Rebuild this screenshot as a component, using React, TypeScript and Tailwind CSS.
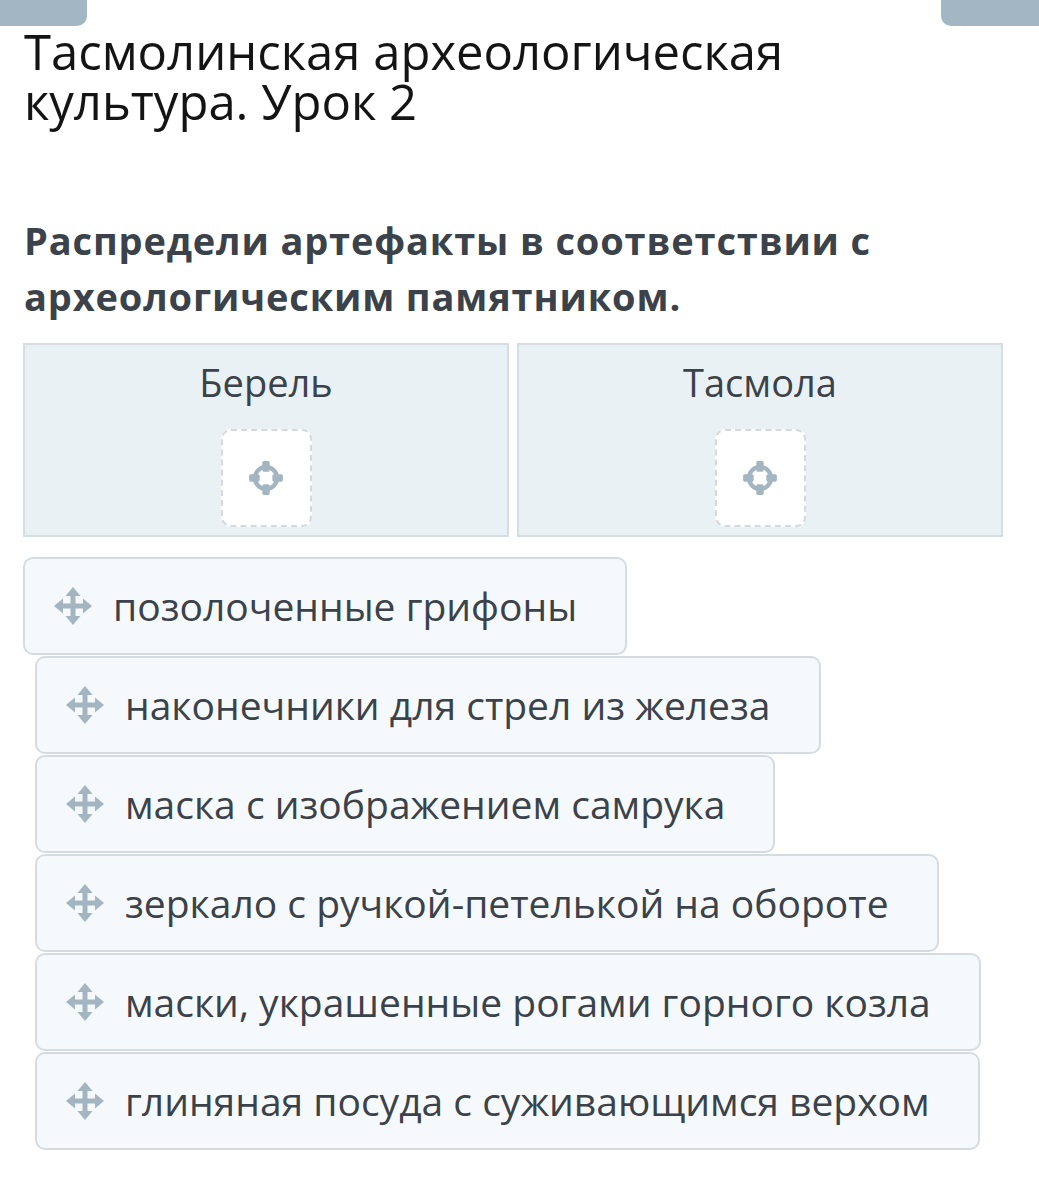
import React from "react";

const items = [
  { text: "позолоченные грифоны", indent: false },
  { text: "наконечники для стрел из железа", indent: true },
  { text: "маска с изображением самрука", indent: true },
  { text: "зеркало с ручкой-петелькой на обороте", indent: true },
  { text: "маски, украшенные рогами горного козла", indent: true },
  { text: "глиняная посуда с суживающимся верхом", indent: true },
];

function MoveIcon() {
  return (
    <svg width="40" height="40" viewBox="0 0 40 40" className="shrink-0">
      <g fill="#a4b5c2">
        <rect x="17.5" y="8" width="5" height="24" />
        <rect x="8" y="17.5" width="24" height="5" />
        <polygon points="20,1 27.5,10 12.5,10" />
        <polygon points="20,39 27.5,30 12.5,30" />
        <polygon points="1,20 10,12.5 10,27.5" />
        <polygon points="39,20 30,12.5 30,27.5" />
      </g>
    </svg>
  );
}

function TargetIcon() {
  return (
    <svg width="38" height="38" viewBox="0 0 36 36">
      <circle cx="18" cy="18" r="10.5" fill="none" stroke="#a4b5c2" strokeWidth="4" />
      <g fill="#a4b5c2">
        <rect x="14.5" y="2" width="7" height="10" rx="1.5" />
        <rect x="14.5" y="24" width="7" height="10" rx="1.5" />
        <rect x="2" y="14.5" width="10" height="7" rx="1.5" />
        <rect x="24" y="14.5" width="10" height="7" rx="1.5" />
      </g>
    </svg>
  );
}

function DropZone({ label }: { label: string }) {
  return (
    <div className="flex h-[194px] flex-1 flex-col items-center border-2 border-[#d5dee3] bg-[#e9f1f5] pt-[12px]">
      <div className="text-[38px] leading-[50px] text-[#3b4249]">{label}</div>
      <div className="mt-[22px] flex h-[98px] w-[91px] items-center justify-center rounded-[10px] border-2 border-dashed border-[#d3d9de] bg-white">
        <TargetIcon />
      </div>
    </div>
  );
}

export default function App() {
  return (
    <div
      className="relative min-h-[1198px] w-[1039px] bg-white"
      style={{ fontFamily: '"Open Sans", "Noto Sans", sans-serif' }}
    >
      <div className="flex justify-between">
        <div className="h-[26px] w-[87px] rounded-br-[10px] bg-[#a2b6c3]" />
        <div className="h-[26px] w-[98px] rounded-bl-[10px] bg-[#a2b6c3]" />
      </div>

      <h1 className="mt-0 px-[24px] text-[49px] leading-[50px] text-[#141414]">
        Тасмолинская археологическая культура. Урок 2
      </h1>

      <p className="mt-[86px] px-[24px] text-[38px] font-bold leading-[56px] tracking-[0.85px] text-[#3b4249]">
        Распредели артефакты в соответствии с археологическим памятником.
      </p>

      <div className="mt-[19px] flex gap-[8px] pl-[23px] pr-[36px]">
        <DropZone label="Берель" />
        <DropZone label="Тасмола" />
      </div>

      <div className="mt-[20px] flex flex-col items-start pl-[23px]">
        {items.map((it, i) => (
          <div
            key={i}
            className={
              "flex h-[98px] items-center gap-[20px] rounded-[10px] border-2 border-[#d5dce1] bg-[#f5f9fc] pl-[28px] pr-[48px] text-[39px] text-[#3b4249] " +
              (it.indent ? "ml-[12px] mt-[1px]" : "")
            }
          >
            <MoveIcon />
            <span>{it.text}</span>
          </div>
        ))}
      </div>
    </div>
  );
}
